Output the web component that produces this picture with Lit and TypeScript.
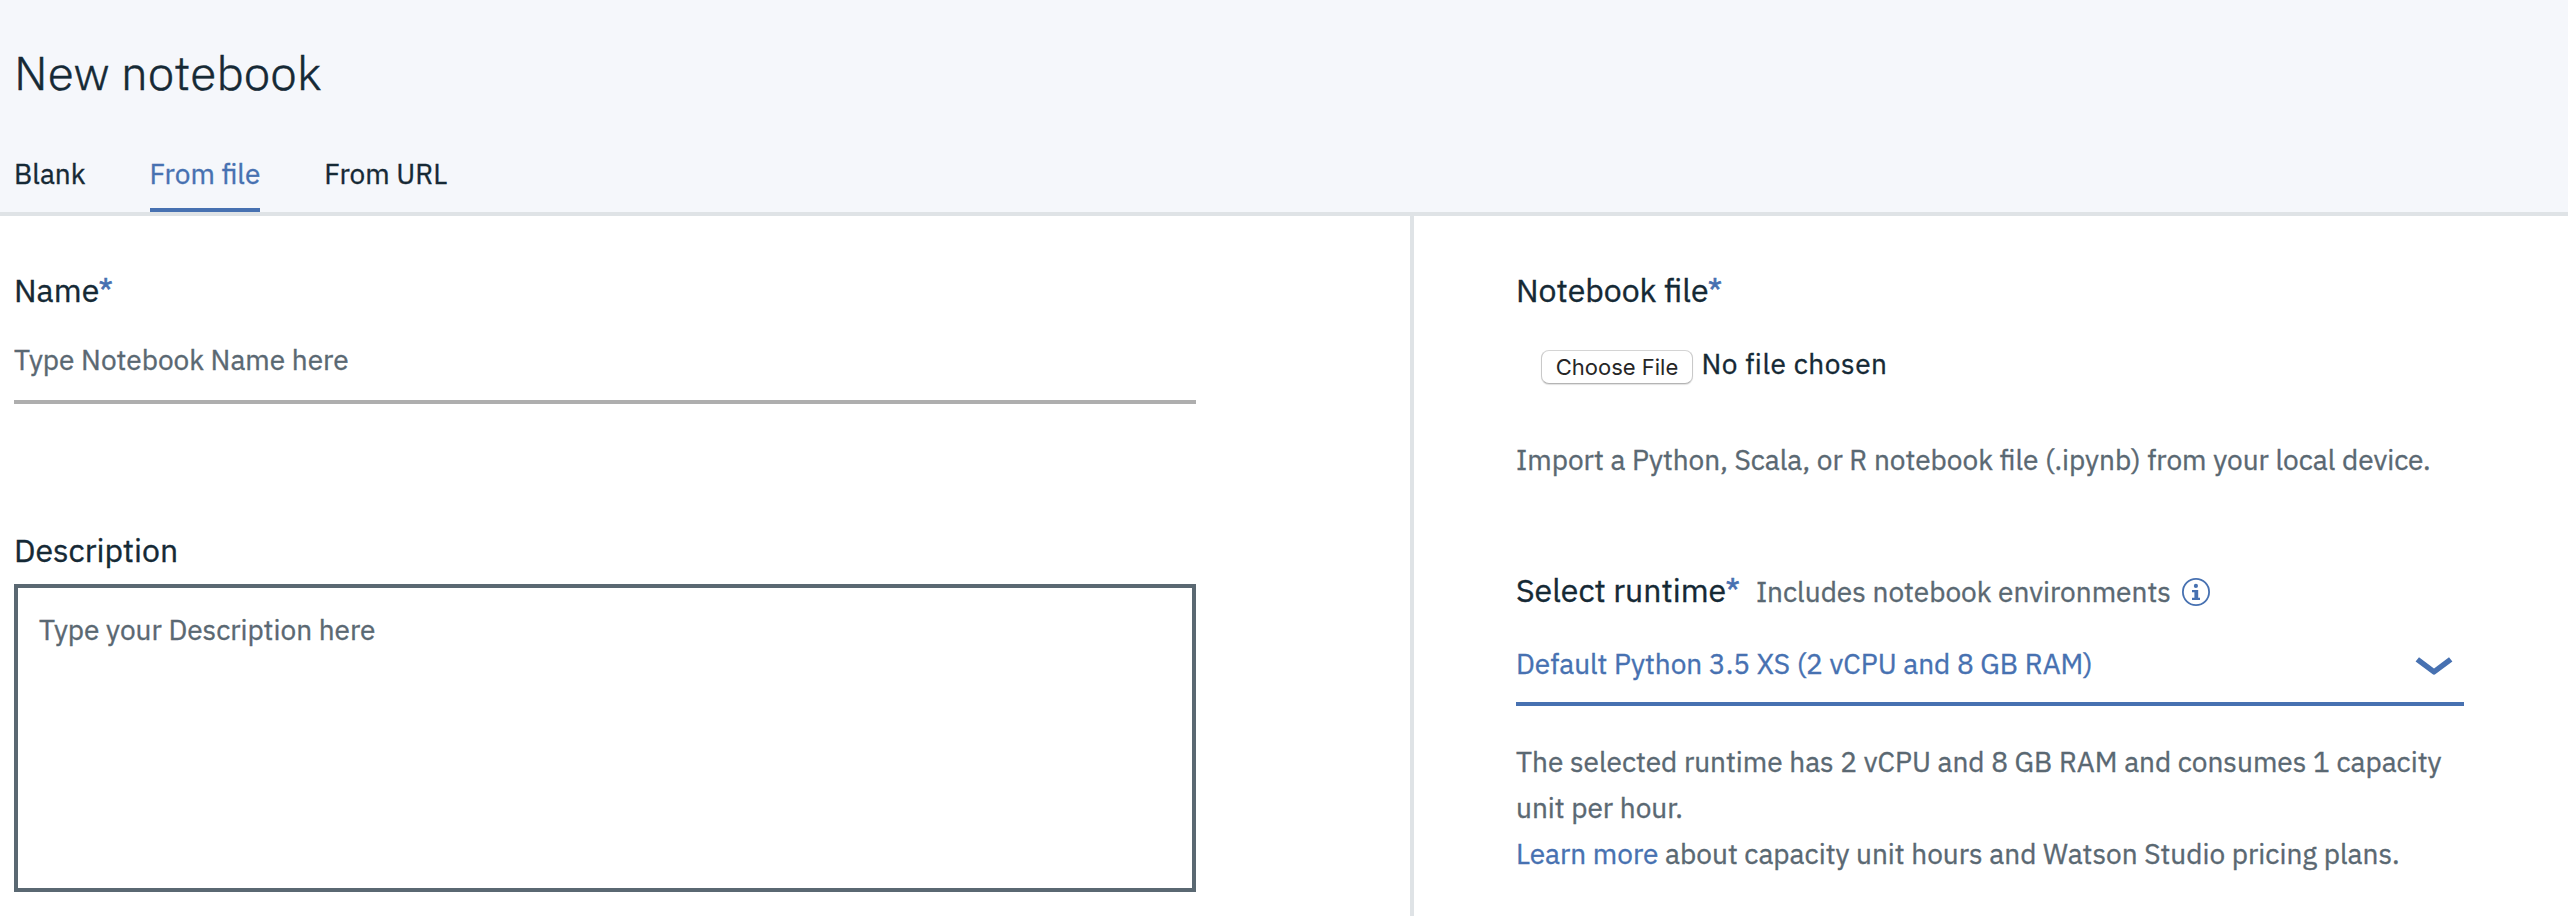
import { LitElement, html, css } from "lit";
import { customElement, property } from "lit/decorators.js";
import { classMap } from "lit/directives/class-map.js";

const infoIcon = html`<svg class="info" width="28" height="28" viewBox="0 0 28 28">
  <circle cx="14" cy="14" r="13.1" fill="none" stroke="currentColor" stroke-width="1.8" />
  <circle cx="13.9" cy="7.9" r="2.1" fill="currentColor" />
  <path d="M10 12h6.2v7.8H18V22h-8v-2.2h2.4v-5.6H10z" fill="currentColor" />
</svg>`;

const chevronIcon = html`<svg class="chevron" width="38" height="20" viewBox="0 0 38 20">
  <path d="M4 1.2 19 12.6 34 1.2 37.4 5.4 20.6 18.1Q19 19.2 17.4 18.1L.6 5.4z" fill="currentColor" />
</svg>`;

@customElement("app-root")
export class AppRoot extends LitElement {
  @property() active = "From file";
  private tabs = ["Blank", "From file", "From URL"];

  static styles = css`
    :host {
      display: flex;
      flex-direction: column;
      height: 916px;
      overflow: hidden;
      box-sizing: border-box;
      background: #fff;
      color: #152935;
      font: 400 28px/37px "IBM Plex Sans", Roboto, sans-serif;
      --blue: #4771b1;
      --gray: #5a6872;
      --rule: #dfe3e6;
      -webkit-text-stroke: 0.35px currentColor;
    }
    *, *::before { box-sizing: border-box; }
    .header {
      flex: none;
      height: 216px;
      padding: 41px 14px 0;
      background: #f5f7fb;
      border-bottom: 4px solid var(--rule);
    }
    .title {
      margin: 0 0 52px;
      font-size: 48px;
      line-height: 62px;
      font-weight: 300;
      -webkit-text-stroke-width: 0.5px;
    }
    .tabs { display: flex; gap: 64px; }
    .tab { height: 57px; border-bottom: 4px solid transparent; white-space: nowrap; }
    .tab.active { color: var(--blue); border-color: var(--blue); }
    .content { flex: 1; display: grid; grid-template-columns: 1410px 1fr; }
    .left { padding: 53px 214px 0 14px; }
    .right { padding: 53px 104px 0 102px; border-left: 4px solid var(--rule); }
    .label { display: block; font-size: 32px; line-height: 42px; white-space: nowrap; }
    .req { color: var(--blue); -webkit-text-stroke: 0.6px var(--blue); }
    .name, .desc {
      display: block;
      width: 100%;
      border: 0;
      border-radius: 0;
      outline: 0;
      background: transparent;
      color: inherit;
      font: inherit;
      resize: none;
    }
    .name { height: 63px; margin-top: 30px; padding: 0 0 22px; border-bottom: 4px solid #aeaeae; }
    .desc { height: 308px; margin-top: 13px; padding: 23px 21px; border: 4px solid var(--gray); }
    .name::placeholder, .desc::placeholder { color: var(--gray); opacity: 1; }
    .desc-label { margin-top: 125px; }
    .file { display: flex; align-items: flex-start; margin: 34px 0 0 25px; }
    .choose {
      width: 152px;
      height: 34px;
      margin: 5px 8.5px 0 0;
      padding: 1px 0 0;
      border: 1px solid #c9c9c9;
      border-top-color: #d4d4d4;
      border-bottom-color: #b4b4b4;
      border-radius: 8px;
      background: #fff;
      box-shadow: 0 1px 1px rgba(0, 0, 0, 0.12);
      color: #262626;
      font: 400 22px/31px Inter, sans-serif;
      text-align: center;
      -webkit-text-stroke-width: 0;
    }
    .chosen { letter-spacing: 0.55px; }
    .hint { margin: 57px 0 0; color: var(--gray); white-space: nowrap; }
    .runtime { display: flex; align-items: baseline; margin-top: 91px; height: 42px; }
    .includes { margin-left: 16px; color: var(--gray); white-space: nowrap; }
    .info { align-self: flex-start; margin: 9px 0 0 11px; color: var(--blue); }
    .select {
      display: flex;
      justify-content: space-between;
      align-items: flex-start;
      width: 948px;
      height: 61px;
      margin-top: 34px;
      padding-right: 11px;
      border-bottom: 4px solid var(--blue);
      color: var(--blue);
    }
    .chevron { margin-top: 11px; }
    .note { width: 948px; margin: 33px 0 0; color: var(--gray); line-height: 46px; }
    .link { color: var(--blue); text-decoration: none; }
  `;

  render() {
    return html`
      <header class="header">
        <h1 class="title">New notebook</h1>
        <nav class="tabs">
          ${this.tabs.map((t) => html`<div class=${classMap({ tab: true, active: t === this.active })}>${t}</div>`)}
        </nav>
      </header>
      <main class="content">
        <section class="left">
          <label class="label">Name<span class="req">*</span></label>
          <input class="name" placeholder="Type Notebook Name here" />
          <label class="label desc-label">Description</label>
          <textarea class="desc" placeholder="Type your Description here"></textarea>
        </section>
        <section class="right">
          <label class="label">Notebook file<span class="req">*</span></label>
          <div class="file"><button class="choose">Choose File</button><span class="chosen">No file chosen</span></div>
          <p class="hint">Import a Python, Scala, or R notebook file (.ipynb) from your local device.</p>
          <div class="runtime">
            <label class="label">Select runtime<span class="req">*</span></label>
            <span class="includes">Includes notebook environments</span>
            ${infoIcon}
          </div>
          <div class="select"><span>Default Python 3.5 XS (2 vCPU and 8 GB RAM)</span>${chevronIcon}</div>
          <p class="note">
            The selected runtime has 2 vCPU and 8 GB RAM and consumes 1 capacity unit per hour.<br />
            <a class="link">Learn more</a> about capacity unit hours and Watson Studio pricing plans.
          </p>
        </section>
      </main>
    `;
  }
}
